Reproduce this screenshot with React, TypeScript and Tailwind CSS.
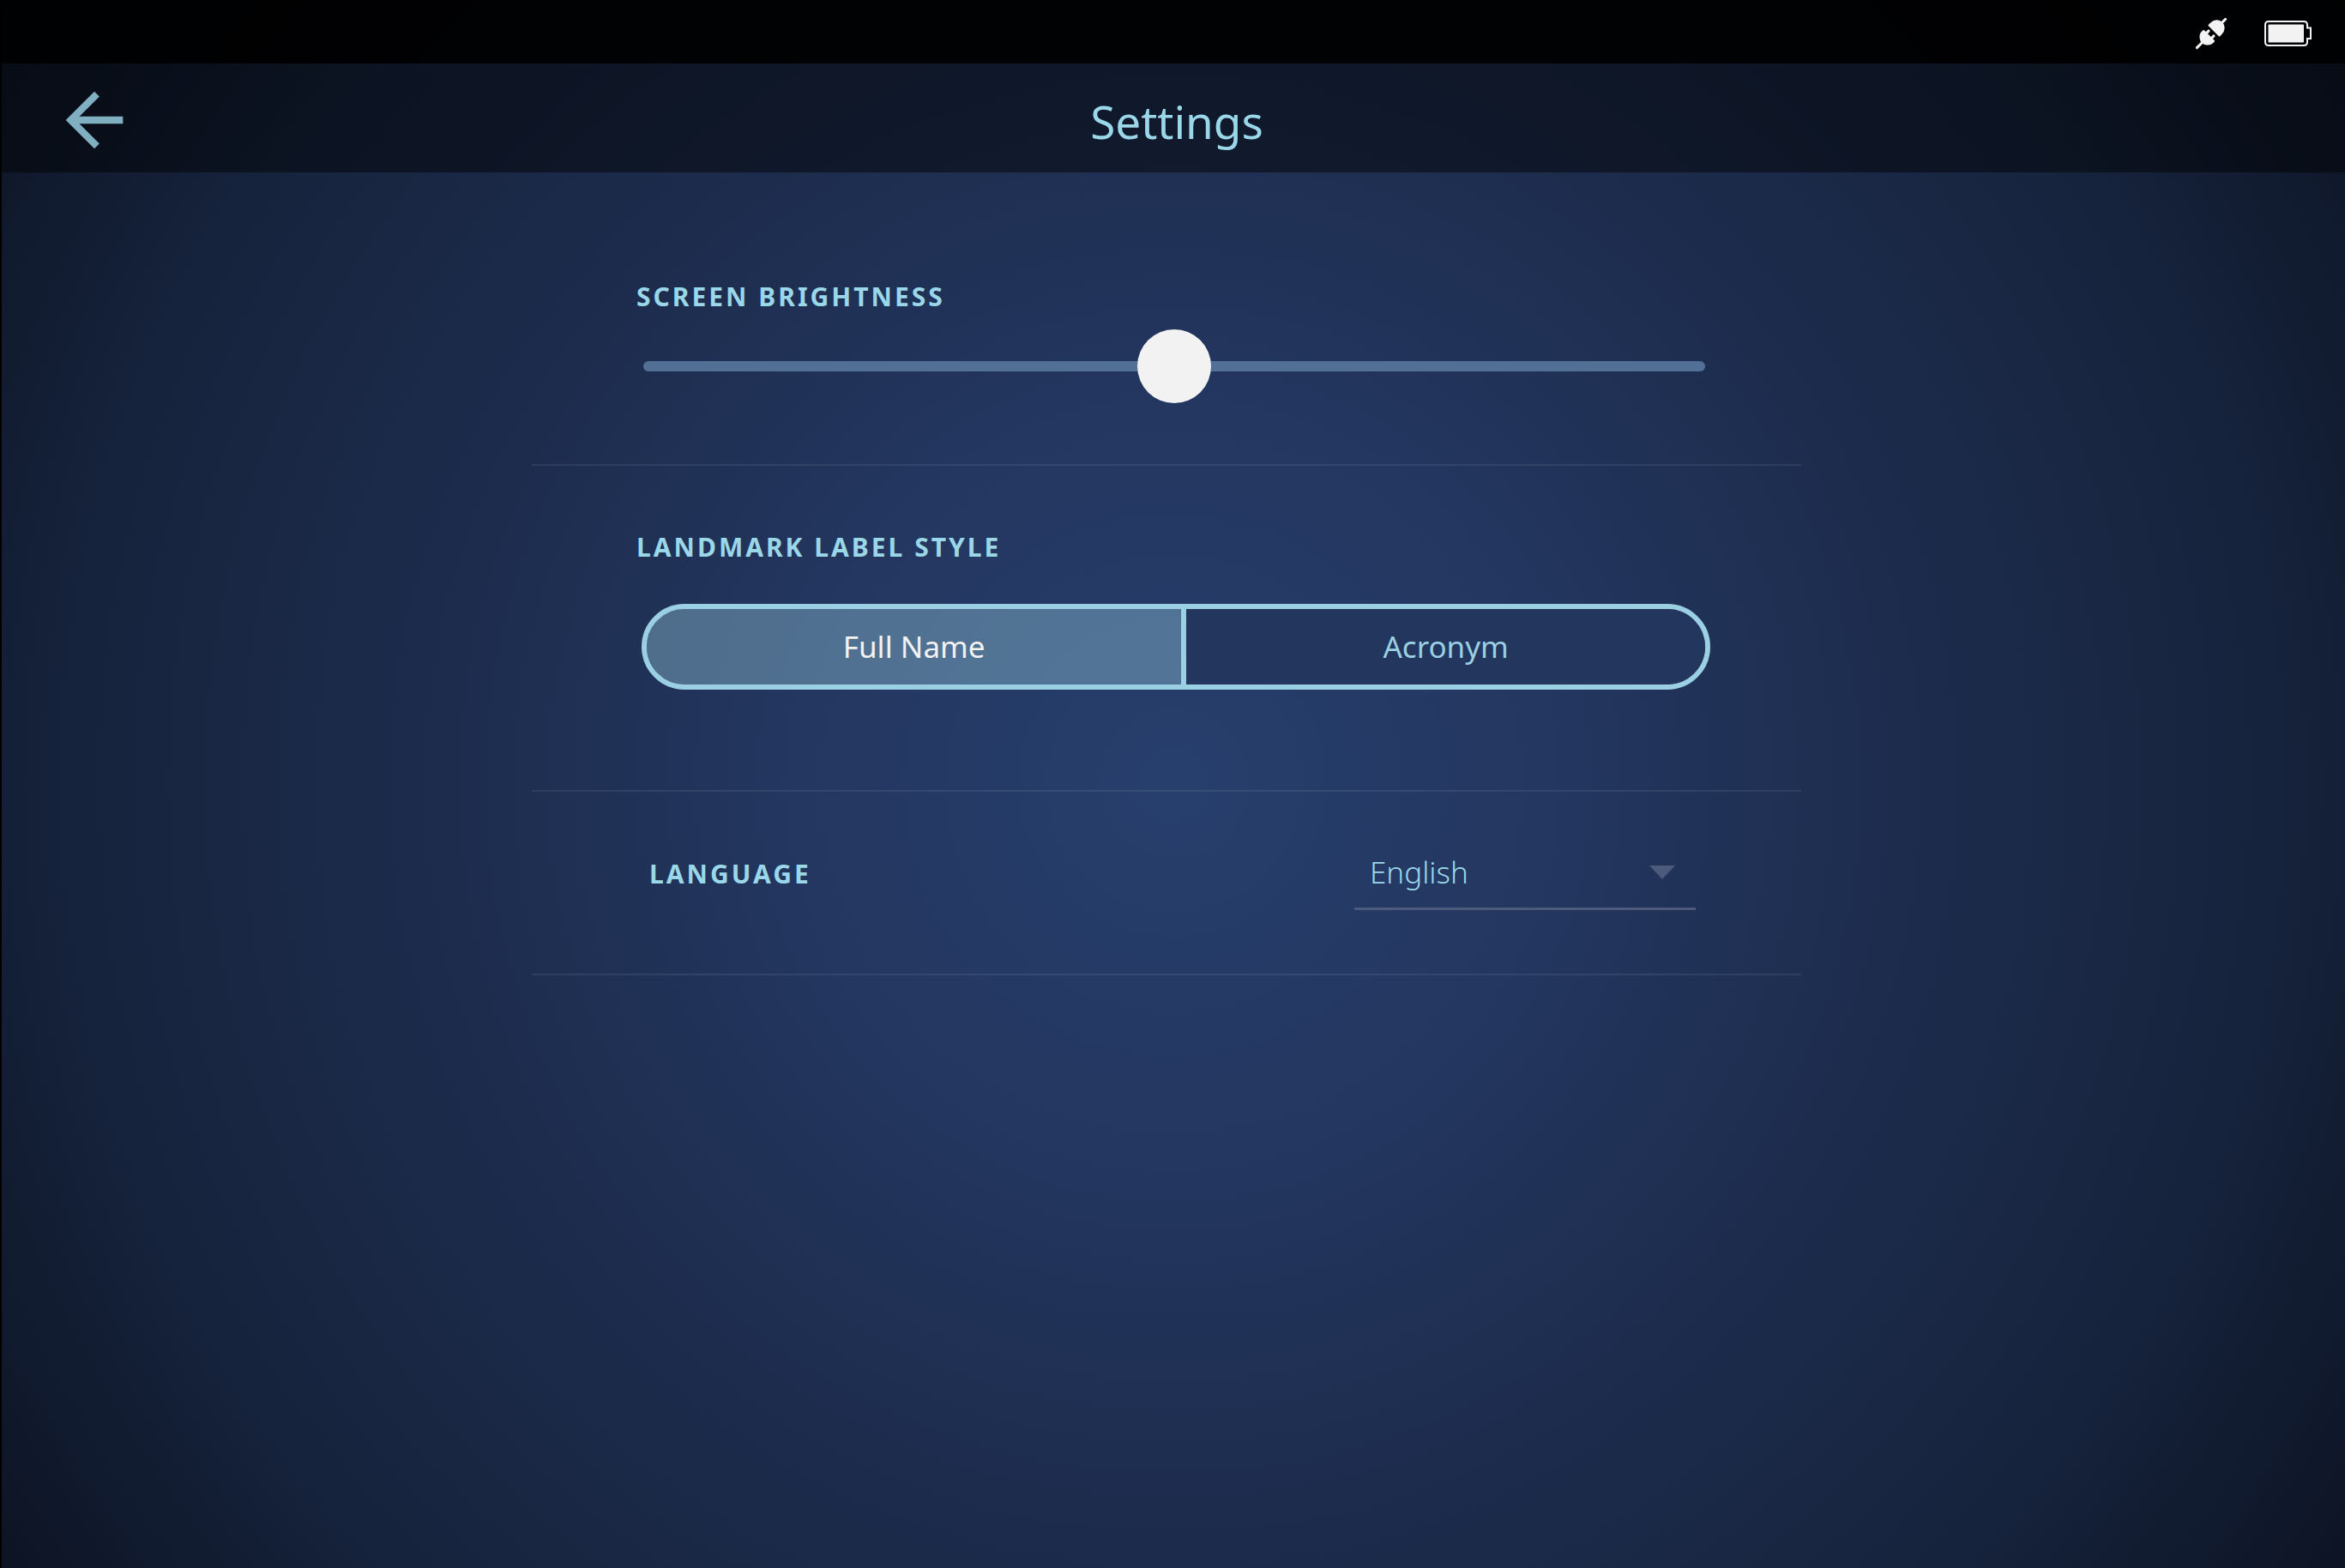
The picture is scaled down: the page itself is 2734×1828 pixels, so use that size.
import { useState } from 'react';

// ── Types ────────────────────────────────────────────────────────

type LabelStyle = 'full' | 'acronym';

// ── Icons ────────────────────────────────────────────────────────

function PlugIcon() {
  return (
    <svg viewBox="0 0 40 40" width="40" height="40" fill="#f2f2f2" aria-hidden="true">
      <g transform="rotate(45 20 20)">
        <rect x="18.5" y="-5" width="3" height="9" rx="1.5" />
        <path d="M10.5 15V12a9.500 10.500 0 0 1 19 0v3q0 1-1 1h-17q-1 0-1-1z" />
        <rect x="14.200" y="18.500" width="3.200" height="7" rx="1.500" />
        <rect x="22.600" y="18.500" width="3.200" height="7" rx="1.500" />
        <path d="M12 23h16q1.500 0 1.500 1.500v2q0 4-4 7-2.500 2-5.500 2t-5.500-2q-4-3-4-7v-2q0-1.500 1.500-1.500z" />
        <rect x="18.500" y="34" width="3" height="11" rx="1.500" />
      </g>
    </svg>
  );
}

function BatteryIcon() {
  return (
    <svg viewBox="0 0 56 30" width="56" height="30" fill="none" aria-hidden="true">
      <path
        d="M5 1h41q4 0 4 4v3.500h4v12.500h-4v4q0 4-4 4H5q-4 0-4-4V5q0-4 4-4z"
        stroke="#f2f2f2"
        strokeWidth="2"
      />
      <rect x="4.500" y="4.500" width="41.500" height="21" rx="1" fill="#f2f2f2" />
    </svg>
  );
}

function BackIcon() {
  return (
    <svg viewBox="0 0 24 24" className="size-[100px] fill-[#7fafc1]" aria-hidden="true">
      <path d="M20 11H7.830l5.590-5.590L12 4l-8 8 8 8 1.410-1.410L7.830 13H20z" />
    </svg>
  );
}

// ── Component ────────────────────────────────────────────────────

export default function App() {
  const [brightness, setBrightness] = useState(50);
  const [labelStyle, setLabelStyle] = useState<LabelStyle>('full');
  const [language, setLanguage] = useState('en');

  return (
    <div className="flex min-h-screen flex-col border-l-2 border-black bg-[radial-gradient(circle_farthest-corner_at_50%_50%,#273f6d_0%,#23365f_28%,#1d2c4d_52%,#16243e_76%,#0d1424_100%)] font-['Noto_Sans',sans-serif] text-[#9ad7e9]">
      {/* Status bar */}
      <div className="flex h-[74px] items-center justify-end gap-[42px] bg-black/95 pt-1 pr-[38px]">
        <PlugIcon />
        <BatteryIcon />
      </div>

      {/* Header */}
      <header className="grid h-[127px] grid-cols-[1fr_auto_1fr] items-center bg-black/45 px-[58px] pt-1">
        <button type="button" aria-label="Back" className="justify-self-start">
          <BackIcon />
        </button>
        <h1 className="pt-1 pl-2 text-[53px] leading-[72px]">Settings</h1>
      </header>

      <main className="w-full pr-4">
        <div className="mx-auto max-w-[1480px]">
          {/* Screen brightness */}
          <section className="border-b-2 border-white/8 pt-[125px] pr-[106px] pb-[71px] pl-[122px]">
            <label
              htmlFor="brightness"
              className="block text-[30px] leading-[40px] font-bold tracking-widest"
            >
              SCREEN BRIGHTNESS
            </label>
            <div className="mt-[18px] pr-[6px] pl-2">
              <input
                id="brightness"
                type="range"
                min={0}
                max={100}
                value={brightness}
                onChange={(e) => setBrightness(Number(e.target.value))}
                className="block h-[86px] w-full appearance-none bg-transparent [&::-webkit-slider-runnable-track]:h-3 [&::-webkit-slider-runnable-track]:rounded-full [&::-webkit-slider-runnable-track]:bg-[#527096] [&::-webkit-slider-thumb]:mt-[-37px] [&::-webkit-slider-thumb]:size-[86px] [&::-webkit-slider-thumb]:appearance-none [&::-webkit-slider-thumb]:rounded-full [&::-webkit-slider-thumb]:bg-[#f2f2f2]"
              />
            </div>
          </section>

          {/* Landmark label style */}
          <section className="border-b-2 border-white/8 pt-[75px] pr-[106px] pb-[117px] pl-[122px]">
            <h2
              id="label-style"
              className="text-[30px] leading-[40px] font-bold tracking-widest"
            >
              LANDMARK LABEL STYLE
            </h2>
            <div className="mt-[46px] pl-[6px]">
              <div
                role="group"
                aria-labelledby="label-style"
                className="flex h-[100px] overflow-hidden rounded-full border-6 border-[#9bcfe3] text-[35px]"
              >
                <button
                  type="button"
                  aria-pressed={labelStyle === 'full'}
                  onClick={() => setLabelStyle('full')}
                  className={`w-[51%] border-r-6 border-[#9bcfe3] ${labelStyle === 'full' ? 'bg-[#9bcfe3]/38 text-[#f2f2f2]' : 'bg-[#23365e] text-[#9bcfe3]'}`}
                >
                  Full Name
                </button>
                <button
                  type="button"
                  aria-pressed={labelStyle === 'acronym'}
                  onClick={() => setLabelStyle('acronym')}
                  className={`flex-1 ${labelStyle === 'acronym' ? 'bg-[#9bcfe3]/38 text-[#f2f2f2]' : 'bg-[#23365e] text-[#9bcfe3]'}`}
                >
                  Acronym
                </button>
              </div>
            </div>
          </section>

          {/* Language */}
          <section className="flex items-center justify-between border-b-2 border-white/8 pt-[53px] pr-[123px] pb-[74px] pl-[137px]">
            <label
              htmlFor="language"
              className="text-[30px] leading-[40px] font-bold tracking-widest"
            >
              LANGUAGE
            </label>
            <div className="grid w-[398px] items-center border-b-3 border-[#4c5b7b]">
              <select
                id="language"
                value={language}
                onChange={(e) => setLanguage(e.target.value)}
                className="col-start-1 row-start-1 h-[82px] w-full appearance-none bg-transparent pl-[18px] text-[35px] font-light"
              >
                <option value="en">English</option>
              </select>
              <svg
                viewBox="0 0 30 16"
                width="30"
                height="16"
                className="pointer-events-none col-start-1 row-start-1 mr-6 justify-self-end fill-[#4c5b7b]"
                aria-hidden="true"
              >
                <path d="M0 0h30L15 16z" />
              </svg>
            </div>
          </section>
        </div>
      </main>
    </div>
  );
}
